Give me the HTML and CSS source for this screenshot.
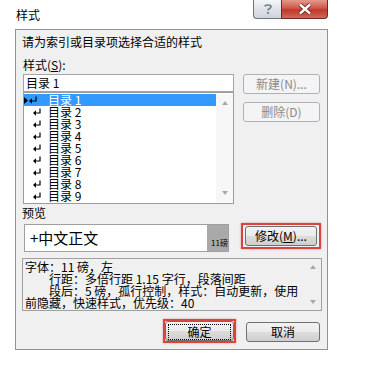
FILE: index.html
```html
<!DOCTYPE html>
<html lang="zh-CN">
<head>
    <meta charset="UTF-8">
    <title>样式</title>
    <link rel="stylesheet" href="styles.css">
</head>
<body>

<div class="fenetre">
    <div class="barre-titre">
        <span class="titre">样式</span>
        <div class="boutons-legende">
            <span class="legende aide">
                <svg width="10" height="12" viewBox="0 0 10 12"><path d="M2 3.5 C2 1.5 8 1.5 8 3.5 C8 5.5 5 5.5 5 7.5" fill="none" stroke="#6f7b8a" stroke-width="1.6"/><rect x="4.1" y="9" width="1.8" height="1.8" fill="#6f7b8a"/></svg>
            </span>
            <span class="legende fermer">
                <svg width="16" height="12" viewBox="0 0 16 12"><path d="M3 1.5 L13 10.5 M13 1.5 L3 10.5" stroke="#5a1c16" stroke-width="4"/><path d="M3 1.5 L13 10.5 M13 1.5 L3 10.5" stroke="#fff" stroke-width="2.4"/></svg>
            </span>
        </div>
    </div>

    <div class="zone-client">
        <p class="intro">请为索引或目录项选择合适的样式</p>

        <div class="haut">
            <div class="colonne-styles">
                <div class="etiquette">样式(<u>S</u>):</div>
                <div class="champ">目录 1</div>
                <div class="liste">
                    <div class="lignes">
                        <div class="ligne choisie"><span class="tete"><svg width="4" height="7" viewBox="0 0 4 7"><path d="M0 0 L4 3.5 L0 7 Z" fill="#000"/></svg><svg class="retour" width="8" height="8" viewBox="0 0 8 8"><path d="M7 0.5 V5 H2" fill="none" stroke="#000" stroke-width="1.2"/><path d="M0 5 L3 2.3 V7.7 Z" fill="#000"/></svg></span>目录 1</div>
                        <div class="ligne"><span class="tete"><svg class="retour" width="8" height="8" viewBox="0 0 8 8"><path d="M7 0.5 V5 H2" fill="none" stroke="#000" stroke-width="1.2"/><path d="M0 5 L3 2.3 V7.7 Z" fill="#000"/></svg></span>目录 2</div>
                        <div class="ligne"><span class="tete"><svg class="retour" width="8" height="8" viewBox="0 0 8 8"><path d="M7 0.5 V5 H2" fill="none" stroke="#000" stroke-width="1.2"/><path d="M0 5 L3 2.3 V7.7 Z" fill="#000"/></svg></span>目录 3</div>
                        <div class="ligne"><span class="tete"><svg class="retour" width="8" height="8" viewBox="0 0 8 8"><path d="M7 0.5 V5 H2" fill="none" stroke="#000" stroke-width="1.2"/><path d="M0 5 L3 2.3 V7.7 Z" fill="#000"/></svg></span>目录 4</div>
                        <div class="ligne"><span class="tete"><svg class="retour" width="8" height="8" viewBox="0 0 8 8"><path d="M7 0.5 V5 H2" fill="none" stroke="#000" stroke-width="1.2"/><path d="M0 5 L3 2.3 V7.7 Z" fill="#000"/></svg></span>目录 5</div>
                        <div class="ligne"><span class="tete"><svg class="retour" width="8" height="8" viewBox="0 0 8 8"><path d="M7 0.5 V5 H2" fill="none" stroke="#000" stroke-width="1.2"/><path d="M0 5 L3 2.3 V7.7 Z" fill="#000"/></svg></span>目录 6</div>
                        <div class="ligne"><span class="tete"><svg class="retour" width="8" height="8" viewBox="0 0 8 8"><path d="M7 0.5 V5 H2" fill="none" stroke="#000" stroke-width="1.2"/><path d="M0 5 L3 2.3 V7.7 Z" fill="#000"/></svg></span>目录 7</div>
                        <div class="ligne"><span class="tete"><svg class="retour" width="8" height="8" viewBox="0 0 8 8"><path d="M7 0.5 V5 H2" fill="none" stroke="#000" stroke-width="1.2"/><path d="M0 5 L3 2.3 V7.7 Z" fill="#000"/></svg></span>目录 8</div>
                        <div class="ligne"><span class="tete"><svg class="retour" width="8" height="8" viewBox="0 0 8 8"><path d="M7 0.5 V5 H2" fill="none" stroke="#000" stroke-width="1.2"/><path d="M0 5 L3 2.3 V7.7 Z" fill="#000"/></svg></span>目录 9</div>
                    </div>
                    <div class="defilement">
                        <span class="fleche-haut"></span>
                        <span class="fleche-bas"></span>
                    </div>
                </div>
            </div>
            <div class="boutons-cote">
                <button class="bouton" disabled>新建(N)...</button>
                <button class="bouton" disabled>删除(D)</button>
            </div>
        </div>

        <div class="etiquette apercu-titre">预览</div>

        <div class="rangee-apercu">
            <div class="apercu">
                <span class="apercu-texte">+中文正文</span>
                <span class="apercu-taille">11磅</span>
            </div>
            <div class="encadre encadre-modifier">
                <button class="bouton modifier">修改(<u>M</u>)...</button>
            </div>
        </div>

        <div class="description">
            <div class="description-texte">
                <div>字体：11 磅，左</div>
                <div class="retrait">行距：多倍行距 1.15 字行，段落间距</div>
                <div class="retrait">段后：5 磅，孤行控制，样式：自动更新，使用</div>
                <div>前隐藏，快速样式，优先级：40</div>
            </div>
            <div class="defilement">
                <span class="fleche-haut"></span>
                <span class="fleche-bas"></span>
            </div>
        </div>

        <div class="pied">
            <div class="encadre encadre-ok">
                <button class="bouton ok"><span class="focus">确定</span></button>
            </div>
            <button class="bouton annuler">取消</button>
        </div>
    </div>
</div>

</body>
</html>
```

FILE: styles.css
```css
body {
    margin: 0;
    width: 366px;
    height: 377px;
    overflow: hidden;
    background: #fff;
    font-family: "Noto Sans CJK SC", "Noto Sans", sans-serif;
    font-size: 12px;
    color: #000;
}

.barre-titre {
    height: 29px;
    display: flex;
    align-items: flex-start;
}

.titre {
    margin: 8px 0 0 16px;
    line-height: 14px;
}

.boutons-legende {
    display: flex;
    margin-left: auto;
    margin-right: 38px;
}

.legende {
    height: 19px;
    box-sizing: border-box;
    display: flex;
    align-items: center;
    justify-content: center;
    border: 1px solid #6d7480;
    border-top: none;
}

.aide {
    width: 28px;
    border-right: none;
    border-radius: 0 0 0 4px;
    background: linear-gradient(#f4f6f8, #dfe3e8 50%, #cfd4da);
}

.fermer {
    width: 47px;
    border-color: #6e2a22;
    border-radius: 0 0 4px 0;
    background: linear-gradient(#e49a8c, #d0574a 45%, #c0372a 55%, #d2685a);
}

.zone-client {
    margin-left: 15px;
    width: 313px;
    height: 321px;
    box-sizing: border-box;
    border: 1px solid #939393;
    background: #f0f0f0;
    padding: 5px 0 0 6px;
}

.intro {
    margin: 0;
    line-height: 14px;
}

.etiquette {
    line-height: 14px;
}

.haut {
    display: flex;
    margin-top: 9px;
}

.colonne-styles {
    width: 211px;
    margin-left: 1px;
}

.champ {
    margin-top: 2px;
    height: 18px;
    box-sizing: border-box;
    border: 1px solid #a5a5a5;
    background: #fff;
    padding-left: 2px;
    line-height: 16px;
}

.liste {
    display: flex;
    height: 112px;
    box-sizing: border-box;
    border: 1px solid #9c9c9c;
    background: #fff;
    padding: 1px 0 1px 0;
}

.lignes {
    flex: 1;
}

.ligne {
    display: flex;
    align-items: center;
    height: 12px;
    line-height: 12px;
    white-space: nowrap;
}

.tete {
    width: 24px;
    box-sizing: border-box;
    padding-left: 9px;
    display: flex;
    align-items: center;
    gap: 1px;
}

.choisie {
    background: #3399ff;
    color: #fff;
}

.choisie .tete {
    padding-left: 0;
}

.defilement {
    width: 17px;
    background: #f7f7f7;
    display: flex;
    flex-direction: column;
    justify-content: space-between;
    align-items: center;
    padding: 7px 0;
}

.fleche-haut {
    width: 0;
    height: 0;
    border-left: 3.5px solid transparent;
    border-right: 3.5px solid transparent;
    border-bottom: 4px solid #a8a8a8;
}

.fleche-bas {
    width: 0;
    height: 0;
    border-left: 3.5px solid transparent;
    border-right: 3.5px solid transparent;
    border-top: 4px solid #a8a8a8;
}

.boutons-cote {
    display: flex;
    flex-direction: column;
    gap: 8px;
    margin-left: 9px;
    padding-top: 16px;
}

.bouton {
    font: inherit;
    color: #000;
    height: 20px;
    box-sizing: border-box;
    padding: 0;
    border: 1px solid #707070;
    border-radius: 3px;
    background: linear-gradient(#f2f2f2, #ebebeb 50%, #dddddd 50%, #cfcfcf);
    line-height: 18px;
}

.bouton:disabled {
    border-color: #adb2b5;
    background: #f4f4f4;
    color: #8a8a8a;
}

.boutons-cote .bouton {
    width: 77px;
}

.apercu-titre {
    margin-top: 2px;
}

.rangee-apercu {
    display: flex;
    align-items: flex-start;
    margin-top: 3px;
}

.apercu {
    display: flex;
    width: 205px;
    height: 28px;
    box-sizing: border-box;
    margin: 1px 0 0 2px;
    border: 1px solid #a0a0a0;
    background: #fff;
}

.apercu-texte {
    flex: 1;
    padding-left: 5px;
    font-size: 15px;
    line-height: 26px;
}

.apercu-taille {
    width: 21px;
    background: #a9a9a9;
    font-size: 8px;
    line-height: 10px;
    display: flex;
    align-items: flex-end;
    padding: 0 0 3px 4px;
    box-sizing: border-box;
    white-space: nowrap;
}

.encadre {
    border: 2px solid #d6453f;
    box-shadow: 0 0 2px rgba(214, 69, 63, 0.5);
}

.encadre-modifier {
    margin-left: 12px;
    padding: 1px 2px;
}

.modifier {
    width: 72px;
}

.description {
    display: flex;
    width: 300px;
    height: 53px;
    box-sizing: border-box;
    margin-top: 6px;
    border: 1px solid #a0a0a0;
    background: #f0f0f0;
}

.description-texte {
    flex: 1;
    padding: 2px 0 0 2px;
    line-height: 12px;
    white-space: nowrap;
}

.retrait {
    padding-left: 24px;
}

.description .defilement {
    background: #f0f0f0;
    padding: 6px 0;
}

.pied {
    display: flex;
    align-items: flex-start;
    justify-content: flex-end;
    gap: 10px;
    margin-top: 8px;
    padding-right: 7px;
}

.ok {
    width: 69px;
    padding: 2px;
}

.focus {
    display: block;
    height: 14px;
    line-height: 14px;
    border: 1px dotted #000;
}

.annuler {
    width: 74px;
    margin-top: 3px;
}
```
